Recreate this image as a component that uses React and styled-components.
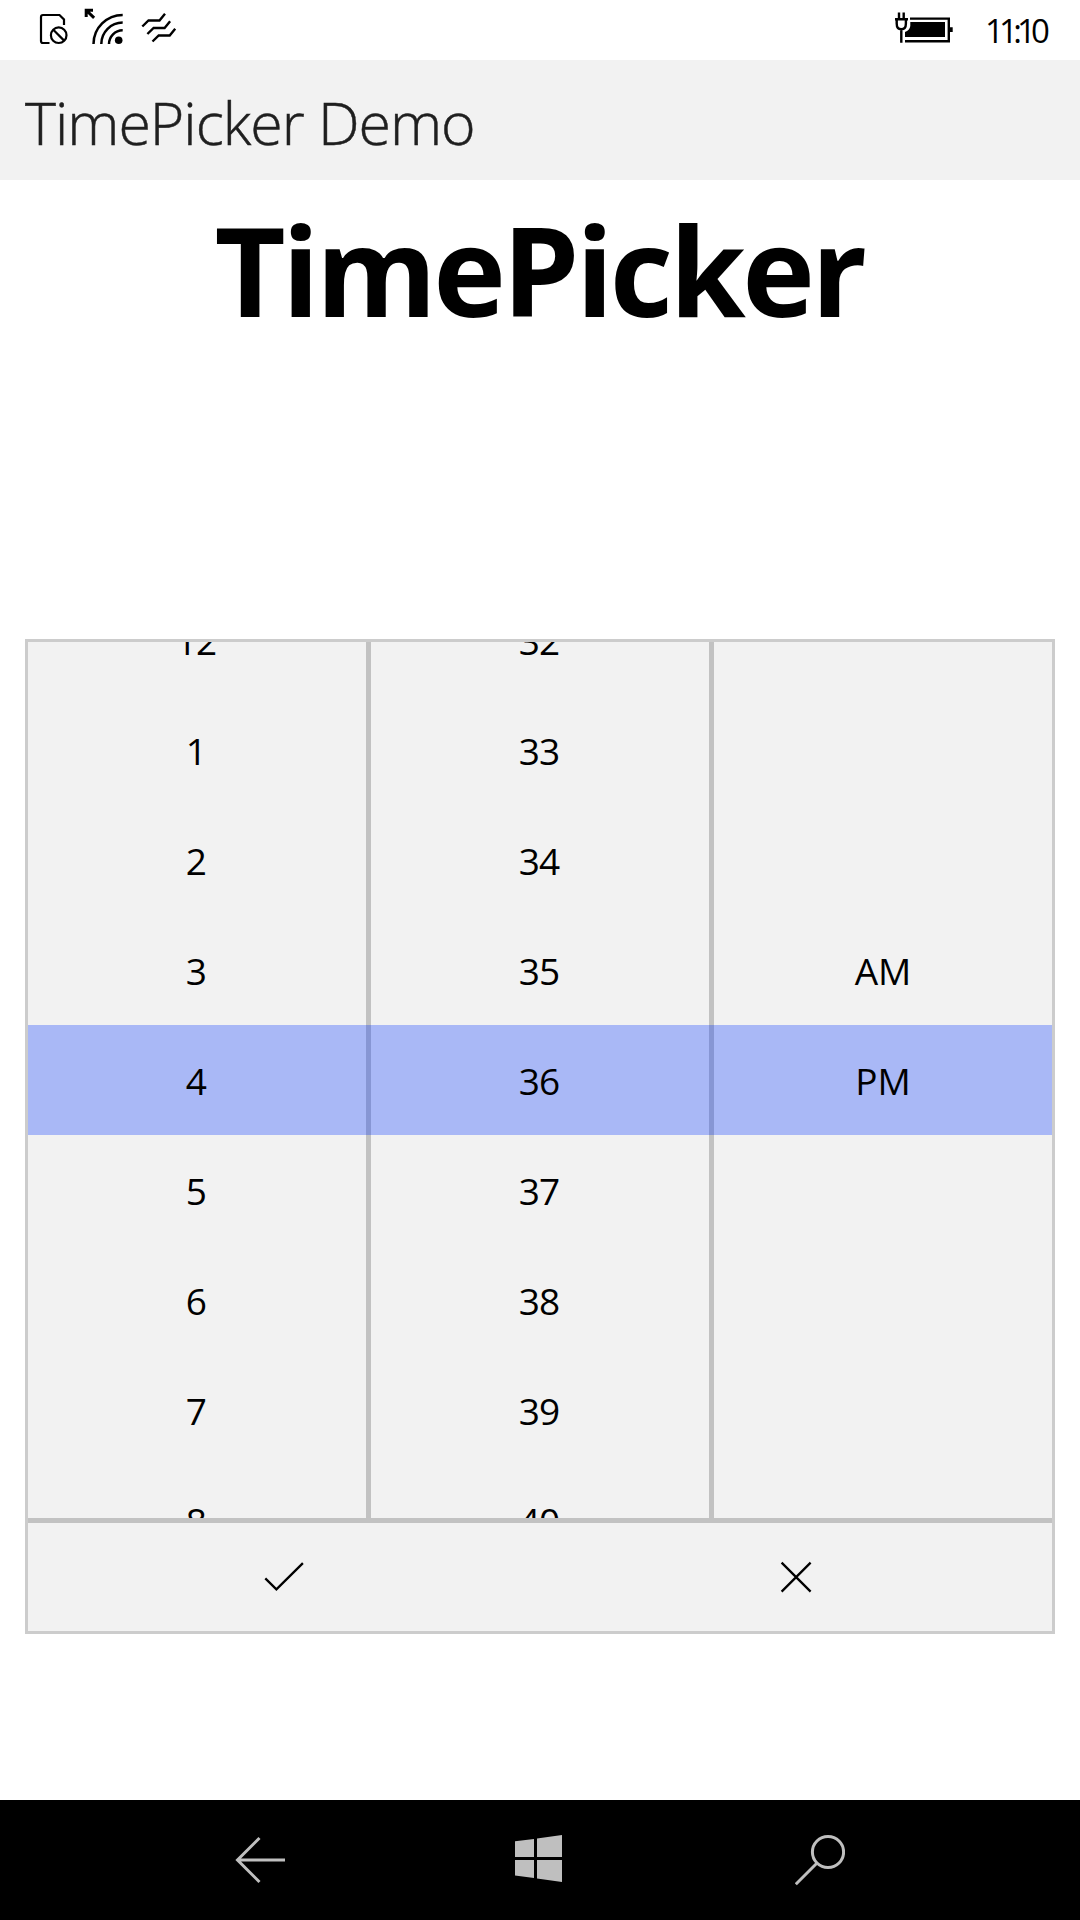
import React from "react";
import styled, { createGlobalStyle } from "styled-components";

const GlobalStyle = createGlobalStyle`
  * { box-sizing: border-box; }
  body { margin: 0; background: #fff; }
`;

const Screen = styled.div`
  width: 1080px;
  height: 1920px;
  display: flex;
  flex-direction: column;
  overflow: hidden;
  background: #fff;
  color: #000;
  font-family: "Open Sans", "Noto Sans", sans-serif;
`;

const StatusBar = styled.header`
  height: 60px;
  flex: none;
  display: flex;
  justify-content: space-between;
  padding: 0 31px 0 36px;
`;

const StatusGroup = styled.div`
  display: flex;
  align-items: center;
  gap: ${(p) => p.$gap || 0}px;
`;

const Clock = styled.time`
  width: 64px;
  font-size: 33px;
  line-height: 61px;
  letter-spacing: -4.8px;
  white-space: nowrap;
`;

const TitleBar = styled.div`
  height: 120px;
  flex: none;
  padding-left: 25px;
  background: #f2f2f2;
  color: #1f1f1f;
  font-size: 59px;
  font-weight: 300;
  line-height: 124px;
  letter-spacing: -1px;
  -webkit-text-stroke: 0.5px currentColor;
  white-space: nowrap;
`;

const Content = styled.main`
  flex: 1;
  display: flex;
  flex-direction: column;
  align-items: center;
`;

const Heading = styled.h1`
  margin: 0;
  height: 459px;
  flex: none;
  padding-right: 2px;
  font-size: 123px;
  font-weight: 700;
  line-height: 179px;
  letter-spacing: -3.6px;
`;

const Picker = styled.section`
  width: 1030px;
  height: 995px;
  flex: none;
  display: flex;
  flex-direction: column;
  border: 3px solid #cccccc;
  background: #f2f2f2;
`;

const Columns = styled.div`
  position: relative;
  height: 876px;
  flex: none;
  display: grid;
  grid-template-columns: repeat(3, 338px);
  column-gap: 5px;
  background: #c2c2c2;
  overflow: hidden;
`;

const Column = styled.div`
  height: 876px;
  display: flex;
  flex-direction: column;
  justify-content: center;
  background: #f2f2f2;
  overflow: hidden;
`;

const Cell = styled.div`
  height: 110px;
  flex: none;
  z-index: 1;
  text-align: center;
  font-size: 37px;
  line-height: 112px;
  padding-right: ${(p) => (p.$wide ? "0px" : "2px")};
  letter-spacing: ${(p) => (p.$wide ? "0px" : "-0.9px")};
`;

const SelectionBand = styled.div`
  position: absolute;
  left: 0;
  right: 0;
  top: 383px;
  height: 110px;
  background: rgba(0, 51, 255, 0.3);
`;

const Actions = styled.div`
  height: 113px;
  flex: none;
  display: grid;
  grid-template-columns: 1fr 1fr;
  border-top: 5px solid #c2c2c2;
`;

const ActionButton = styled.button`
  display: flex;
  align-items: center;
  justify-content: center;
  padding: 0;
  border: 0;
  background: transparent;
  color: #000;
`;

const NavBar = styled.nav`
  height: 120px;
  flex: none;
  display: flex;
  align-items: center;
  gap: 230px;
  padding-left: 235px;
  background: #000;
`;

const NavButton = styled.button`
  width: 50px;
  height: 52px;
  padding: 0;
  border: 0;
  background: transparent;
  color: #bfbfbf;
`;

const Icon = styled.svg`
  display: block;
  flex: none;
  fill: ${(p) => (p.$solid ? "currentColor" : "none")};
  stroke: ${(p) => (p.$solid ? "none" : "currentColor")};
  stroke-width: ${(p) => p.$stroke || 2.4};
`;

const SimIcon = () => (
  <Icon width="34" height="60" viewBox="36 0 34 60" $stroke={2.2}>
    <path d="M49.5 43H43q-2 0-2-2V17q0-2 2-2h16.5l4.5 4.5V25" />
    <circle cx="58.7" cy="35.2" r="7.8" />
    <path d="M53.3 29.8l10.8 10.8" />
  </Icon>
);

const WifiIcon = () => (
  <Icon width="42" height="60" viewBox="82 0 42 60" $stroke={2.5}>
    <path d="M86.2 17V10.2H93M86.5 10.5l7.6 7.4" strokeWidth="3" />
    <path d="M122.7 15A29.2 29.2 0 0 0 93.5 44M122.7 22.6A21.5 21.5 0 0 0 101.3 44M122.7 30.2A13.8 13.8 0 0 0 109 44" />
    <circle cx="118.7" cy="40.3" r="3.8" fill="currentColor" stroke="none" />
  </Icon>
);

const DataIcon = () => (
  <Icon width="42" height="60" viewBox="136 0 42 60">
    <path d="M142.3 26.5l6.2-6h11l5.5-6.7M147.4 34l6.2-6h11l5.5-6.7M152.5 41.5l6.2-6h11l5.5-6.7" />
  </Icon>
);

const BatteryIcon = () => (
  <Icon width="60" height="60" viewBox="894 0 60 60">
    <path d="M899 12.5V19M903.7 12.5V19M895 19.3h13M896.7 19v4.5q0 5.8 4.6 5.8t4.6-5.8V19M901.3 29v13.7" />
    <path d="M910 18.6h38.8V41.2H905" />
    <path d="M950 27.3h2.7v4.8H950zM910.3 22H945v15h-40v-5q4.6-1.6 5.3-6z" fill="currentColor" stroke="none" />
  </Icon>
);

const CheckIcon = () => (
  <Icon width="40" height="40" viewBox="264 1557 40 40" $stroke={2.3}>
    <path d="M265.3 1578.4l11.1 10.9 26.5-26.2" />
  </Icon>
);

const CloseIcon = () => (
  <Icon width="34" height="34" viewBox="779 1560 34 34" $stroke={2.3}>
    <path d="M781.6 1562.6l29 29M810.6 1562.6l-29 29" />
  </Icon>
);

const BackIcon = () => (
  <Icon width="50" height="52" viewBox="235 1834 50 52" $stroke={3}>
    <path d="M285 1860h-48M259.5 1838l-22 22 22 22" />
  </Icon>
);

const WindowsIcon = () => (
  <Icon width="50" height="52" viewBox="515 1834 50 52" $solid>
    <path d="M515 1841.3l19-2.4v18.1h-19zM537 1838.5l25-3.5v22h-25zM515 1860h19v18l-19-2.4zM537 1860h25v22l-25-3.5z" />
  </Icon>
);

const SearchIcon = () => (
  <Icon width="50" height="52" viewBox="795 1834 50 52" $stroke={3}>
    <circle cx="828" cy="1852" r="15.6" />
    <path d="M816.8 1863.2l-21 21" />
  </Icon>
);

const hours = ["12", "1", "2", "3", "4", "5", "6", "7", "8"];
const minutes = ["32", "33", "34", "35", "36", "37", "38", "39", "40"];
const periods = ["", "", "", "AM", "PM", "", "", "", ""];

export default function App() {
  return (
    <>
      <GlobalStyle />
      <Screen>
        <StatusBar>
          <StatusGroup $gap={12}>
            <SimIcon />
            <WifiIcon />
            <DataIcon />
          </StatusGroup>
          <StatusGroup $gap={31}>
            <BatteryIcon />
            <Clock>11:10</Clock>
          </StatusGroup>
        </StatusBar>
        <TitleBar>TimePicker Demo</TitleBar>
        <Content>
          <Heading>TimePicker</Heading>
          <Picker>
            <Columns>
              {[hours, minutes, periods].map((values, c) => (
                <Column key={c}>
                  {values.map((v, i) => (
                    <Cell key={i} $wide={c === 2}>{v}</Cell>
                  ))}
                </Column>
              ))}
              <SelectionBand />
            </Columns>
            <Actions>
              <ActionButton aria-label="Accept"><CheckIcon /></ActionButton>
              <ActionButton aria-label="Cancel"><CloseIcon /></ActionButton>
            </Actions>
          </Picker>
        </Content>
        <NavBar>
          <NavButton aria-label="Back"><BackIcon /></NavButton>
          <NavButton aria-label="Start"><WindowsIcon /></NavButton>
          <NavButton aria-label="Search"><SearchIcon /></NavButton>
        </NavBar>
      </Screen>
    </>
  );
}
